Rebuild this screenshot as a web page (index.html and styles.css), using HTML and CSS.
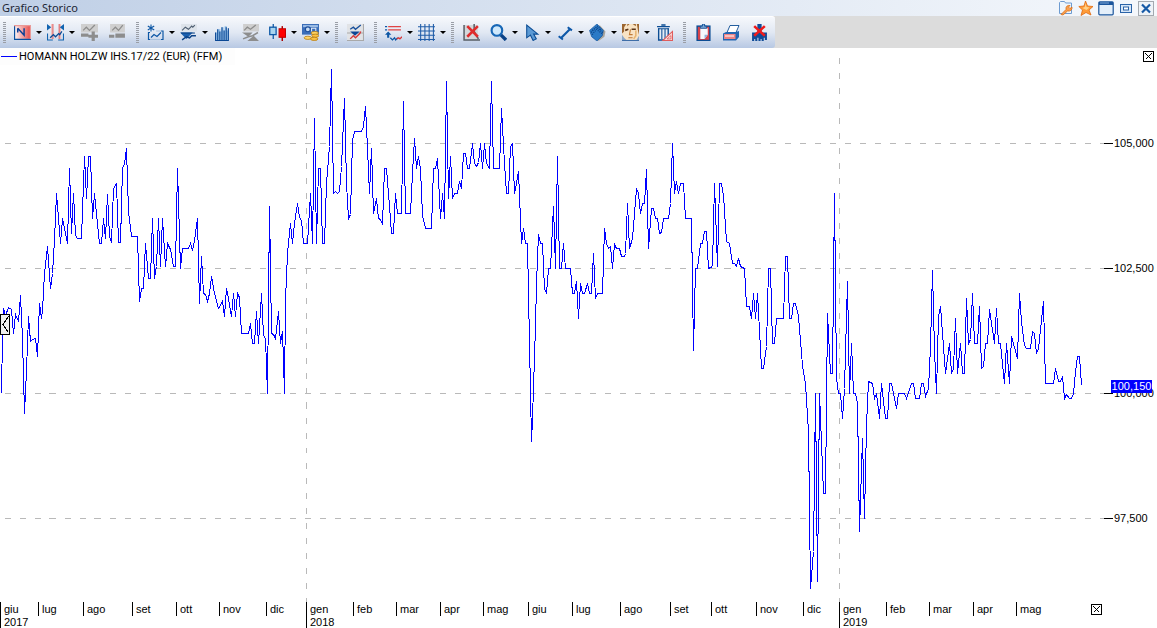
FILE: index.html
```html
<!DOCTYPE html>
<html lang="it">
<head>
<meta charset="utf-8">
<title>Grafico Storico</title>
<link rel="stylesheet" href="styles.css">
</head>
<body>
<div class="window">
  <header class="titlebar">
    <h1 class="title">Grafico Storico</h1>
    <div class="window-actions">
      <button class="win-btn" aria-label="Impostazioni"><svg viewBox="0 0 16 16"><path d="M1.500 13.500v-11l1-1h4l1 1.500h6v10.500z" fill="#eef5fc" stroke="#6d9bd1"/><path d="m3 14.500 5-5c-.5-3 1.500-4.500 4-4L10.500 7l1.500 1.500L14 7c.5 3-2 4.500-4.500 4L5 15z" fill="#f9a050" stroke="#dd6d12" stroke-width=".8"/></svg></button>
      <button class="win-btn" aria-label="Preferiti"><svg viewBox="0 0 16 16"><path d="m7.500 1 2 5 5.500.500-4 3.500 2 5-5-2.500L3 15.500 4.500 10 .8 6.500 6 6z" fill="#ff9c38" stroke="#e06a10" stroke-width=".8"/><path d="m7.500 3 1 4 3 .500-3 2.500-4-2 2.500-1z" fill="#ffd28a"/></svg></button>
      <button class="win-btn" aria-label="Ingrandisci"><svg viewBox="0 0 16 16"><rect x=".8" y="1.800" width="14.400" height="13" rx="1" fill="#e4effa" stroke="#1b559c" stroke-width="1.200"/><path d="M1 2h14v3H1z" fill="#1b559c"/><path d="M2 3h9" stroke="#7fa9d8"/></svg></button>
      <button class="win-btn" aria-label="Ripristina"><svg viewBox="0 0 16 16"><rect x="2.500" y="4.500" width="11" height="8" fill="#d6e6f7" stroke="#2a63a8"/><rect x="5.500" y="7" width="5" height="3" fill="#fff" stroke="#2a63a8"/></svg></button>
      <button class="win-btn" aria-label="Chiudi"><svg viewBox="0 0 16 16"><rect x=".5" y="1.500" width="15" height="14" fill="#eef3f8" stroke="#a3a9b0"/><path d="m4 4.500 8 8m0-8-8 8" stroke="#1559a6" stroke-width="2.200"/></svg></button>
    </div>
  </header>

  <div class="toolbar-row">
    <div class="toolbar" role="toolbar" aria-label="Strumenti grafico">
      <span class="grip"></span>
      <div class="group">
        <button class="tool drop" aria-label="Tipo grafico"><svg viewBox="0 0 16 16"><defs><linearGradient id="pink"><stop offset="0" stop-color="#fff"/><stop offset="1" stop-color="#e8504e"/></linearGradient></defs><path d="M0 1h15v13H0z" fill="url(#pink)"/><path d="M.5 1v13.500H16" fill="none" stroke="#0a50a0" stroke-width="1.200"/><path d="M15.500 1v13M0 1.500h15" stroke="#e99a98"/><path d="M3.500 4v4M3.500 4l6 6.500V4" fill="none" stroke="#0a3f96" stroke-width="1.400"/></svg></button>
        <button class="tool drop" aria-label="Intervallo"><svg viewBox="0 0 16 16"><path d="M5.500 0v14M11.500 0v14" stroke="#e04a48"/><path d="M4.500 0v14M12.500 0v14" stroke="#f4b3b0"/><path d="M0 0v6l4-3zM16 0v6l-4-3z" fill="#1264b0"/><path d="M.5 9v6h5M15.500 9v6h-5" fill="none" stroke="#1264b0"/><path d="m3 13 3-3 2 2 3-3 1 1 2-3" fill="none" stroke="#0b4a94" stroke-width="1.200"/></svg></button>
        <button class="tool" aria-label="Aggiungi"><svg viewBox="0 0 16 16"><path d="M0 0h16v8H0z" fill="#cfcfcf"/><path d="m2 6 3-3 3 3 5-5" fill="none" stroke="#8d8d8d" stroke-width="1.200"/><path d="M0 9h7v3H0zM10 7h3v3h3v3h-3v3h-3v-3H7v-3h3z" fill="#8d8d8d"/></svg></button>
        <button class="tool" aria-label="Rimuovi"><svg viewBox="0 0 16 16"><path d="M1 0h14v8H1z" fill="#cfcfcf"/><path d="m3 6 3-3 3 3 4-5" fill="none" stroke="#8d8d8d" stroke-width="1.200"/><path d="M0 10h5v3H0zM6 9h9v4H6z" fill="#8d8d8d"/></svg></button>
      </div>
      <span class="grip"></span>
      <div class="group">
        <button class="tool drop" aria-label="Nuovo grafico"><svg viewBox="0 0 17 16"><path d="M4 0v7M.8 1.500l6.400 4M7.200 1.500l-6.400 4" stroke="#0d57a5" stroke-width="1.100"/><path d="M3 8H1.500v7H3M14 6.500h2V15h-2" fill="none" stroke="#0d57a5" stroke-width="1.200"/><path d="M9 6.500h5M3 15h11" stroke="#a9c2de"/><path d="m4 13 3-3 3 2 4-4" fill="none" stroke="#0d57a5" stroke-width="1.200"/></svg></button>
        <button class="tool drop" aria-label="Confronta"><svg viewBox="0 0 16 16"><path d="M1 0h15v7H1z" fill="#dde3ea"/><path d="m2 6 3-3 3 2 3-3 1 1 2-2" fill="none" stroke="#4d5d70"/><path d="M0 8h12l-6 6z" fill="#1a5fae"/><path d="M1 8.500h13" stroke="#0b4287"/><path d="m2 15 4-3 3 1 2-2h4" fill="none" stroke="#0b4287" stroke-width="1.400"/></svg></button>
        <button class="tool" aria-label="Volumi"><svg viewBox="0 0 16 16"><path d="M1 8h2V5h3v2h1V3h2v3h1V2h2v4h1V4h1v12H1z" fill="#8fbce6"/><path d="M1.500 8v8M3.500 5v11M5.500 7v9M7.500 3v13M9.500 6v10M11.500 3v13M13.500 4v12M1 15.500h13" stroke="#0a4794"/></svg></button>
        <button class="tool" aria-label="Indicatore"><svg viewBox="0 0 16 16"><path d="M1 0h15v7H1z" fill="#cfcfcf"/><path d="m2 6 3-3 3 2 5-4" fill="none" stroke="#8d8d8d" stroke-width="1.200"/><path d="M0 8h10l-4 4zM16 16H5l6-5z" fill="#8d8d8d"/><path d="m1 14 5-2 4-1 5-3" fill="none" stroke="#8d8d8d" stroke-width="1.500"/></svg></button>
        <button class="tool drop" aria-label="Candele"><svg viewBox="0 0 16 16"><path d="M4 0v14" stroke="#0d57a5" stroke-width="1.200"/><rect x=".7" y="3" width="6" height="7" fill="#a9d4ef" stroke="#0d57a5" stroke-width="1.200"/><path d="M12.500 2v14" stroke="#a00" stroke-width="1.400"/><rect x="9.500" y="4.500" width="6" height="8" fill="#f00" stroke="#c00000"/></svg></button>
        <button class="tool drop" aria-label="Valuta"><svg viewBox="0 0 16 16"><path d="M0 0h16v10H0z" fill="#3a6db8"/><path d="M1 1h14v2H1z" fill="#9dbde5"/><circle cx="5.500" cy="5" r="2.300" fill="#c6dbf2" stroke="#1d4e9b"/><path d="M9 7V4h4v3" fill="none" stroke="#dfeaf7"/><ellipse cx="12" cy="8.500" rx="3.500" ry="1.500" fill="#ffd667" stroke="#b98018" stroke-width=".8"/><ellipse cx="12.500" cy="11" rx="3.300" ry="1.500" fill="#fbc345" stroke="#b98018" stroke-width=".8"/><ellipse cx="5.500" cy="13" rx="3.500" ry="1.500" fill="#ffd667" stroke="#b98018" stroke-width=".8"/><ellipse cx="11.500" cy="14" rx="3.500" ry="1.500" fill="#fbc345" stroke="#b98018" stroke-width=".8"/></svg></button>
      </div>
      <span class="grip"></span>
      <div class="group">
        <button class="tool" aria-label="Separa pannelli"><svg viewBox="0 0 16 16"><path d="M0 0h16v16H0z" fill="#e1e3e6"/><path d="M15.500 0v16M0 15.500h16M0 8.500h16" stroke="#a9a9a9"/><path d="m3 5 3-2 2 2 5-4" fill="none" stroke="#174f9b" stroke-width="1.200"/><path d="M3 7h9l-4.500 4z" fill="#0d4595"/><path d="m3 14 3-3 2 2 4-4 1-2" fill="none" stroke="#d63a3a" stroke-width="1.300"/></svg></button>
      </div>
      <span class="grip"></span>
      <div class="group">
        <button class="tool drop" aria-label="Studi"><svg viewBox="0 0 16 16"><path d="M0 2.500h2M0 5.500h2" stroke="#0d57a5" stroke-width="1.300"/><path d="M3 2.500h12M3 5.500h12" stroke="#e04444" stroke-width="1.300"/><path d="m0 10 3-3 3 3H4v3H2v-3z" fill="#0d57a5"/><path d="m5 13 2 2 2-2 1 2 2-2" fill="none" stroke="#0d57a5" stroke-width="1.200"/><path d="m11 14 2-1 1 1 2-2" fill="none" stroke="#d93434" stroke-width="1.200"/></svg></button>
        <button class="tool drop" aria-label="Griglia"><svg viewBox="0 0 16 16"><path d="M0 2.500h16M0 6.500h16M0 10.500h16M0 14.500h16M2.500 0v16M6.500 0v16M10.500 0v16M14.500 0v16" stroke="#1f5ca8"/></svg></button>
      </div>
      <span class="grip"></span>
      <div class="group">
        <button class="tool" aria-label="Nascondi assi"><svg viewBox="0 0 16 16"><path d="M1 1h13v13H1z" fill="#d4d7da"/><path d="M1 1v14h15M10.500 0v7l4 7" fill="none" stroke="#575d64" stroke-width="1.400"/><path d="m4 2 10 10m0-10L4 12" stroke="#e02c2c" stroke-width="2.400"/></svg></button>
        <button class="tool drop" aria-label="Zoom"><svg viewBox="0 0 16 16"><path d="m10 10 5 5" stroke="#0a4287" stroke-width="3.200"/><circle cx="6.500" cy="6" r="5" fill="#cfe8fb" stroke="#1767b6" stroke-width="2"/></svg></button>
        <button class="tool drop" aria-label="Puntatore"><svg viewBox="0 0 16 16"><path d="M3.500 1v12L7 10.500l2.500 5 3-1.500-2.500-4.500h4z" fill="#5b9ad5" stroke="#0c4d94"/></svg></button>
        <button class="tool drop" aria-label="Linea"><svg viewBox="0 0 16 16"><path d="m5 13 8-8" stroke="#0c57a8" stroke-width="2"/><path d="m2.500 11.500 4 3M11 3l4 3" stroke="#0c57a8" stroke-width="1.800"/></svg></button>
        <button class="tool drop" aria-label="Forme"><svg viewBox="0 0 16 16"><path d="m10 1 5.500 6-1 5-5.500 4-3-4z" fill="#a8a49c"/><path d="m7.500 0 6 6-1 5-5 5-5-4-2-6z" fill="#2b7ac6" stroke="#0c4f98" stroke-width=".6"/><path d="m3 6 5-4 4 4M2 8l5-5 6 5M3 10l4-5 5 4" fill="none" stroke="#0b3f80" stroke-dasharray="1 1"/></svg></button>
        <button class="tool drop" aria-label="Modelli"><svg viewBox="0 0 16 16"><path d="M0 0h16v16H0z" fill="#f8e3c4"/><path d="M0 0h4L2 3v4L0 9zM14 0h2v10l-1-4zM5 0h2L5 2zM10 0h3v2z" fill="#9c6630"/><path d="m0 10 2 3 3 3H0zM16 11l-3 5h3z" fill="#8fa9c8"/><path d="m3 6 3-1M9 5l4 0" stroke="#5b3417" stroke-width="1.500"/><path d="m8 5-1 5h3M6 13h4" stroke="#c07a35" fill="none"/><path d="M13 6v5l-2 3" stroke="#e8b572" stroke-width="1.500" fill="none"/><path d="M0 15.500h16" stroke="#3f6ea8"/></svg></button>
        <button class="tool" aria-label="Elimina oggetti"><svg viewBox="0 0 16 16"><path d="M1 2.500h12M5 1h4M2.500 4v11h9V4" fill="#e5edf5" stroke="#0c4d94" stroke-width="1.300"/><path d="M2 4.500h10M5.500 5v9M8.500 5v9" stroke="#0c4d94"/><path d="M6.500 15.500 15.500 7v8.500z" fill="#fbd8d5" stroke="#e05c5c"/><path d="m10.500 14 3.500-3v3z" fill="#fff" stroke="#e05c5c" stroke-width=".8"/></svg></button>
      </div>
      <span class="grip"></span>
      <div class="group">
        <button class="tool" aria-label="Copia negli appunti"><svg viewBox="0 0 16 16"><rect x="2" y="2" width="12" height="13.500" fill="#d8434a" stroke="#0c4d94" stroke-width="1.300"/><path d="M5 4h7v6l-3 4H5z" fill="#f5f9fd"/><path d="M9 14v-4h3z" fill="#8db3dd"/><path d="M5 4V2h2V0h2v2h2v2z" fill="#7ba9d8" stroke="#0c4d94" stroke-width=".8"/></svg></button>
        <button class="tool" aria-label="Stampa"><svg viewBox="0 0 17 16"><path d="m4 8 3-7h9l-3 7z" fill="#fff" stroke="#0c4d94" stroke-width=".9"/><path d="m0 9 3-1.500h10l3-1v6L13 16H0z" fill="#2366b1"/><path d="M1 9.500h11.500v5H1z" fill="#ef8484"/><path d="M2 11.500h9" stroke="#fff"/></svg></button>
        <button class="tool" aria-label="Chiudi grafico"><svg viewBox="0 0 16 16"><path d="M1 8h14v7h-2v-2h-1v3h-2v-2H9v2H7v-3H6v3H4v-2H3v2H1zM6 0h4v8H6z" fill="#104c98"/><path d="m3 2 10 9m0-9L3 11" stroke="#f01b1b" stroke-width="2.400"/></svg></button>
      </div>
    </div>
  </div>

  <main class="chart">
    <div class="plot">
      <svg class="series" viewBox="0 48 1104 554" preserveAspectRatio="none" role="img" aria-label="Andamento storico del prezzo">
        <g transform="translate(.5 .5)">
          <path class="grid-line" d="M4 143H1104M4 268H1104M4 393H1104M4 518H1104M306 57V602M839 57V602"/>
          <polyline class="price-line" points="1,393 2,335 3,308 5,315 8,307 11,309 13,333 15,314 18,321 20,295 22,338 24,413 26,370 28,316 30,341 32,339 35,338 37,356 39,303 41,318 42,310 44,273 47,246 50,288 52,273 54,240 56,193 60,243 62,218 67,243 69,168 71,233 73,193 75,235 77,238 81,238 84,156 86,198 88,156 90,156 92,218 94,193 96,213 99,243 101,243 103,218 105,238 107,194 109,236 111,242 113,188 116,183 118,242 120,242 122,168 124,163 126,148 128,211 131,236 137,236 139,301 141,288 143,288 145,243 148,278 150,278 152,218 154,278 156,266 158,218 160,266 162,218 165,266 167,243 170,249 173,266 175,266 177,168 180,268 182,248 188,248 190,243 192,250 194,240 197,218 199,303 201,256 203,293 205,294 207,301 209,293 211,276 214,293 218,308 222,301 224,316 226,288 228,298 231,316 233,293 235,316 237,293 239,297 241,333 248,333 250,323 252,343 254,343 256,311 258,343 261,293 263,335 265,338 267,393 269,206 271,333 273,334 275,338 278,311 280,343 282,331 284,393 285,300 287,253 290,223 292,243 294,223 297,203 299,217 301,220 303,243 307,243 310,193 312,243 314,118 316,243 318,168 320,168 322,243 324,243 326,183 329,146 331,69 333,193 335,191 337,193 339,191 341,166 344,98 346,183 348,218 350,214 352,140 354,131 361,131 363,126 365,106 367,148 369,193 371,148 373,213 376,198 378,218 380,219 382,224 384,168 386,168 389,206 391,233 393,233 395,193 397,213 401,213 403,101 405,213 410,213 412,173 414,138 416,168 418,156 420,168 422,215 425,228 431,228 433,168 435,168 437,158 440,218 442,193 444,218 446,81 448,198 450,156 452,198 454,193 457,193 459,181 461,188 463,153 465,153 467,168 469,168 472,143 474,163 476,166 478,162 480,143 482,168 484,143 486,163 489,168 491,81 493,168 499,168 501,108 504,163 506,193 508,193 510,146 512,143 514,193 516,183 518,171 521,243 523,228 525,243 527,243 531,441 532,418 535,326 536,283 538,234 540,243 542,243 544,288 546,293 548,268 550,268 553,206 555,268 557,156 559,268 561,268 563,243 565,268 570,268 572,293 574,293 576,281 578,318 580,283 582,293 584,293 587,283 589,293 591,293 593,253 595,298 597,293 602,293 604,228 606,243 608,248 610,246 612,268 614,244 616,248 619,248 621,256 624,256 625,253 627,203 629,248 632,238 636,188 638,193 640,213 642,203 644,203 646,169 648,248 651,208 653,208 655,218 657,218 659,233 661,232 663,218 668,218 670,203 672,143 674,193 676,181 678,193 680,183 683,183 685,218 691,218 693,350 695,268 697,268 700,243 702,243 704,231 706,231 708,268 712,266 714,183 717,266 719,183 721,183 723,195 726,241 729,243 732,263 734,263 736,266 738,258 740,266 744,268 746,306 749,306 751,318 753,293 755,318 757,293 759,330 761,368 763,368 766,346 768,268 770,268 772,343 774,343 776,318 783,318 785,256 787,256 789,318 791,318 793,303 795,303 798,316 802,365 805,383 808,431 810,588 813,551 815,393 817,581 819,393 823,493 825,493 827,313 830,373 832,373 834,193 836,378 838,393 840,393 842,418 844,388 847,281 849,393 851,343 853,393 855,393 857,403 859,531 862,438 864,518 866,425 868,381 872,383 874,398 876,393 879,418 881,383 885,418 887,418 889,383 891,383 893,393 896,408 898,393 904,393 906,398 911,383 913,383 915,398 919,398 921,383 923,383 925,396 928,388 930,346 932,270 934,350 936,393 938,316 940,306 945,373 949,343 951,373 953,368 955,318 957,373 960,343 962,373 964,373 966,298 968,343 970,339 972,293 974,343 977,343 979,306 981,368 983,366 985,343 987,343 989,309 994,343 996,308 998,343 1000,343 1004,383 1006,343 1009,383 1011,336 1017,358 1019,293 1021,321 1024,345 1026,348 1030,348 1032,331 1034,333 1036,353 1038,348 1043,301 1045,383 1053,383 1055,368 1058,381 1060,381 1062,376 1064,398 1066,394 1069,398 1071,398 1073,393 1075,371 1077,356 1079,356 1081,385"/>
        </g>
      </svg>
      <div class="legend"><span class="legend-line"></span>HOMANN HOLZW IHS.17/22 (EUR) (FFM)</div>
      <button class="scroll-back" aria-label="Indietro"><svg viewBox="0 0 8 19"><path d="M7.500 1.500 2 9.500l5.500 8" fill="none" stroke="#000"/></svg></button>
    </div>
    <div class="price-axis">
      <span class="price">105,000</span>
      <span class="price">102,500</span>
      <span class="price">100,000</span>
      <span class="price">97,500</span>
      <strong class="last-price">100,150</strong>
      <button class="box-close pane-close" aria-label="Chiudi pannello"><svg viewBox="0 0 11 11"><path d="M.5.5h10v10H.5zM2.500 2.500l6 6m0-6-6 6"/></svg></button>
    </div>
    <div class="time-axis">
      <div class="month year">giu<br>2017</div>
      <div class="month">lug</div>
      <div class="month">ago</div>
      <div class="month">set</div>
      <div class="month">ott</div>
      <div class="month">nov</div>
      <div class="month">dic</div>
      <div class="month year">gen<br>2018</div>
      <div class="month">feb</div>
      <div class="month">mar</div>
      <div class="month">apr</div>
      <div class="month">mag</div>
      <div class="month">giu</div>
      <div class="month">lug</div>
      <div class="month">ago</div>
      <div class="month">set</div>
      <div class="month">ott</div>
      <div class="month">nov</div>
      <div class="month">dic</div>
      <div class="month year">gen<br>2019</div>
      <div class="month">feb</div>
      <div class="month">mar</div>
      <div class="month">apr</div>
      <div class="month last">mag
        <button class="box-close" aria-label="Chiudi asse"><svg viewBox="0 0 11 11"><path d="M.5.5h10v10H.5zM2.500 2.500l6 6m0-6-6 6"/></svg></button>
      </div>
    </div>
  </main>
</div>
</body>
</html>
```

FILE: styles.css
```css
* {
  box-sizing: border-box;
}

body {
  margin: 0;
  background: #fff;
  color: #000;
  font-family: "Liberation Sans", Arial, sans-serif;
  font-size: 11px;
  line-height: 13px;
}

button {
  margin: 0;
  padding: 0;
  border: 0;
  background: none;
}

svg {
  display: block;
}

.window {
  display: flex;
  flex-direction: column;
  min-height: 100vh;
}

/* Title bar */
.titlebar {
  display: flex;
  justify-content: space-between;
  align-items: center;
  height: 16px;
  padding: 0 1px 0 2px;
  background: linear-gradient(90deg, #bfcfe6, #f5f8fc);
}

.title {
  margin: 0;
  color: #1c2634;
  font-family: "Noto Sans", Tahoma, sans-serif;
  font-size: 11px;
  font-weight: 400;
  line-height: 14px;
}

.window-actions {
  display: flex;
}

.win-btn {
  display: grid;
  place-items: center;
  width: 20px;
  height: 16px;
}

.win-btn svg {
  width: 16px;
  height: 16px;
}

/* Toolbar */
.toolbar-row {
  display: flex;
  height: 32px;
  background: #dcdcdc;
}

.toolbar {
  display: flex;
  align-items: center;
  padding: 0 2px 1px 3px;
  border-top: 1px solid #fff;
  border-radius: 0 3px 3px 0;
  background: linear-gradient(#f6f8fc, #e1e8f3 50%, #b7c8e3);
}

.group {
  display: flex;
}

.group + .grip {
  margin-left: 5px;
}

.grip {
  width: 3px;
  height: 21px;
  margin-right: 3px;
  background: repeating-linear-gradient(#9a9ea6 0 1px, transparent 1px 2px);
}

.tool {
  display: flex;
  align-items: center;
  width: 28px;
  height: 30px;
  padding-left: 6px;
}

.tool svg {
  flex: none;
  width: 17px;
  height: 17px;
}

.tool.drop {
  width: 33px;
  padding-left: 5px;
}

.tool.drop::after {
  content: "";
  margin-left: 5px;
  border: solid transparent;
  border-width: 3px 3px 0;
  border-top-color: #000;
}

/* Chart */
.chart {
  flex: 1;
  display: grid;
  grid-template: minmax(0, 1fr) 26px / minmax(0, 1fr) 53px;
}

.plot {
  position: relative;
  overflow: hidden;
}

.series {
  position: absolute;
  inset: 0;
  width: 100%;
  height: 100%;
  fill: none;
  shape-rendering: crispEdges;
}

.grid-line {
  stroke: #b9b9b9;
  stroke-dasharray: 6 9;
  vector-effect: non-scaling-stroke;
}

.price-line {
  stroke: #00f;
  vector-effect: non-scaling-stroke;
}

.legend {
  position: absolute;
  top: 0;
  left: 0;
  display: flex;
  align-items: center;
  gap: 2px;
  height: 17px;
  padding: 0 13px 0 1px;
  background: #fdfdfd;
  font-family: Roboto, Arial, sans-serif;
  white-space: nowrap;
}

.legend-line {
  width: 16px;
  border-top: 1px solid #00f;
}

.scroll-back {
  position: absolute;
  top: 48%;
  left: 0;
  display: grid;
  place-items: center;
  width: 10px;
  height: 21px;
  border: 1px solid #000;
  background: #f0f0f0;
}

.scroll-back svg {
  width: 8px;
  height: 19px;
  shape-rendering: crispEdges;
}

.price-axis {
  position: relative;
  display: grid;
  grid-template-rows: repeat(4, 125fr);
  padding-top: 33px;
  padding-bottom: 21px;
}

.price {
  display: flex;
  align-items: center;
  gap: 1px;
}

.price::before {
  content: "";
  width: 9px;
  border-top: 1px solid #000;
}

.last-price {
  position: absolute;
  top: 60%;
  left: 7px;
  width: 41px;
  background: #00f;
  color: #fff;
  font-weight: 400;
  line-height: 13px;
  text-align: center;
}

.box-close {
  width: 11px;
  height: 11px;
}

.box-close svg {
  width: 11px;
  height: 11px;
  fill: none;
  stroke: #000;
  shape-rendering: crispEdges;
}

.pane-close {
  position: absolute;
  top: 3px;
  right: 3px;
}

.time-axis {
  grid-column: 1 / -1;
  display: grid;
  grid-template-columns:
    38fr 45fr 49fr 44fr 43fr 47fr 40fr 47fr 43fr 44fr 43fr 45fr
    44fr 48fr 50fr 41fr 45fr 47fr 36fr 47fr 43fr 44fr 43fr 141fr;
  align-items: start;
}

.month {
  min-width: 0;
  height: 14px;
  padding-left: 3px;
  border-left: 1px solid #000;
  line-height: 14px;
}

.month.year {
  height: 26px;
  padding-top: 1px;
  overflow: hidden;
  line-height: 13px;
}

.month.last {
  display: flex;
  justify-content: space-between;
  align-items: center;
  padding-right: 55px;
}
```
